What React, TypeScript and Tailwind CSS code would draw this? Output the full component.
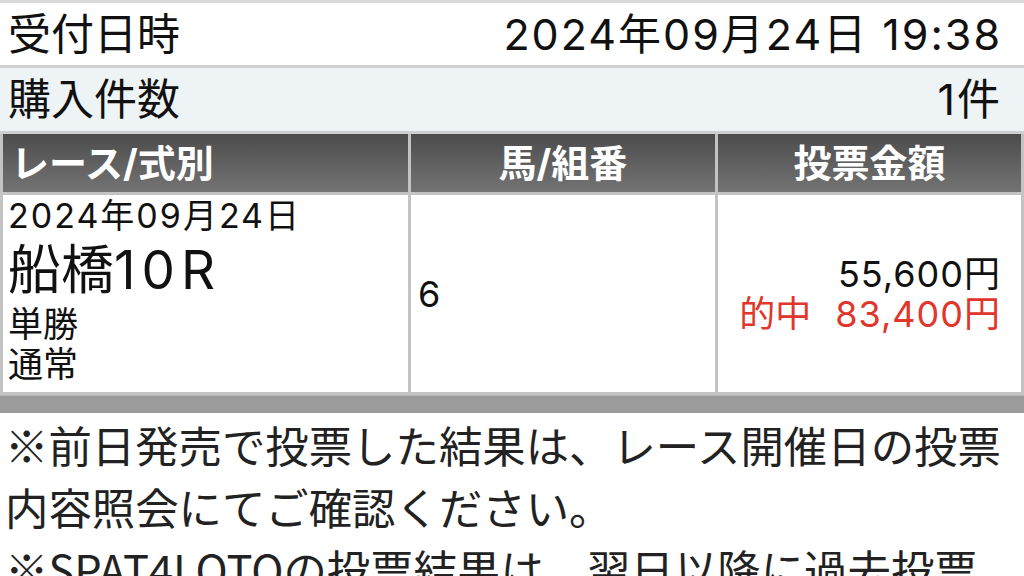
const font = 'font-[Inter,"Noto_Sans_CJK_JP",sans-serif]';
const jp = 'font-["Noto_Sans_CJK_JP",sans-serif]';

function InfoRow({ label, value, shaded, h }: { label: string; value: string; shaded?: boolean; h: string }) {
    return (
        <div
            className={`flex ${h} items-center justify-between border-b-[3px] border-[#cfcfcf] pl-[8px] pr-[22px] text-[43px] text-[#111] ${
                shaded ? 'bg-[#eef4f5]' : 'bg-white'
            }`}
        >
            <span>{label}</span>
            <span className="tracking-[2px]">{value}</span>
        </div>
    );
}

export default function App() {
    return (
        <div className={`h-[576px] w-[1024px] overflow-hidden bg-white ${font}`}>
            <div className="h-[3px] bg-[#d9d9d9]" />
            <InfoRow h="h-[65px]" label="受付日時" value="2024年09月24日 19:38" />
            <InfoRow h="h-[66px]" label="購入件数" value="1件" shaded />

            {/* 投票内容テーブル */}
            <div className="grid grid-cols-[405px_304px_303px] gap-[3px] bg-[#c3c3c3] px-[3px] pb-[3px]">
                <div className="flex h-[58px] items-center bg-gradient-to-b from-[#4c4c4c] to-[#747474] pl-[8px] text-[38px] font-bold text-white">
                    レース/式別
                </div>
                <div className="flex h-[58px] items-center justify-center bg-gradient-to-b from-[#4c4c4c] to-[#747474] text-[38px] font-bold text-white">
                    馬/組番
                </div>
                <div className="flex h-[58px] items-center justify-center bg-gradient-to-b from-[#4c4c4c] to-[#747474] text-[38px] font-bold text-white">
                    投票金額
                </div>

                <div className="flex h-[197px] flex-col bg-white pl-[5px] pt-[1px] text-[#111]">
                    <span className="text-[34px] leading-[40px] tracking-[2px]">2024年09月24日</span>
                    <span className="text-[53px] leading-[68px]">
                        船橋<span className="tracking-[6px]">10R</span>
                    </span>
                    <span className="text-[35px] leading-[40px]">単勝</span>
                    <span className="text-[35px] leading-[40px]">通常</span>
                </div>
                <div className="flex h-[197px] items-center bg-white pl-[7px] text-[36px] text-[#111]">6</div>
                <div className="flex h-[197px] flex-col items-end justify-center bg-white pr-[20px] text-[36px] leading-[40px]">
                    <span className="tracking-[1px] text-[#111]">55,600円</span>
                    <span className="flex gap-[24px] text-[#e0362c]">
                        <span>的中</span>
                        <span className="tracking-[1px]">83,400円</span>
                    </span>
                </div>
            </div>
            <div className="h-[18px] border-t border-[#b5b5b5] bg-[#9b9b9b]" />

            <div className={`pl-[5px] pr-[16px] text-[43.4px] leading-[62px] text-[#222] ${jp}`}>
                <p>※前日発売で投票した結果は、レース開催日の投票内容照会にてご確認ください。</p>
                <p>※SPAT4LOTOの投票結果は、翌日以降に過去投票照会にてご確認ください。</p>
            </div>
        </div>
    );
}
